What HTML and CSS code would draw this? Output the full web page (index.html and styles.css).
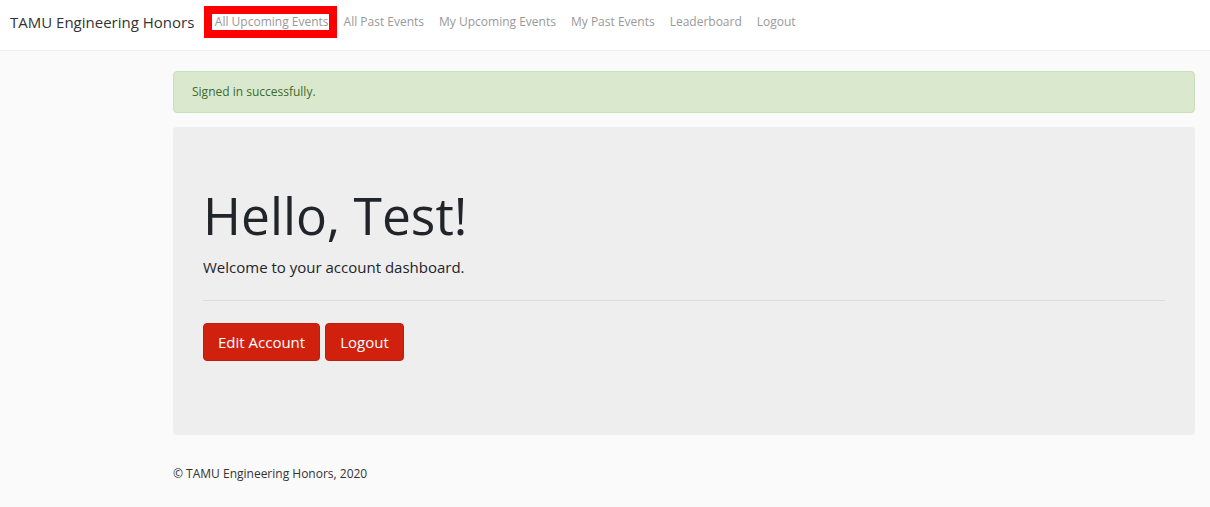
FILE: index.html
```html
<!DOCTYPE html>
<html lang="en">
<head>
<meta charset="utf-8">
<title>TAMU Engineering Honors</title>
<link rel="stylesheet" href="styles.css">
</head>
<body>
<nav class="navbar">
  <a class="brand" href="#">TAMU Engineering Honors</a>
  <ul class="nav">
    <li><a class="nav-link highlighted" href="#"><span class="mark">All Upcoming Events</span></a></li>
    <li><a class="nav-link" href="#">All Past Events</a></li>
    <li><a class="nav-link" href="#">My Upcoming Events</a></li>
    <li><a class="nav-link" href="#">My Past Events</a></li>
    <li><a class="nav-link" href="#">Leaderboard</a></li>
    <li><a class="nav-link" href="#">Logout</a></li>
  </ul>
</nav>
<main class="main">
  <div class="alert">Signed in successfully.</div>
  <section class="jumbotron">
    <h1 class="title">Hello, Test!</h1>
    <p class="lead">Welcome to your account dashboard.</p>
    <hr class="rule">
    <div class="actions">
      <a class="btn" href="#">Edit Account</a>
      <a class="btn" href="#">Logout</a>
    </div>
  </section>
  <footer class="footer">© TAMU Engineering Honors, 2020</footer>
</main>
</body>
</html>
```
FILE: styles.css
```css
* { box-sizing: border-box; }
html, body { margin: 0; padding: 0; }
body {
  font-family: "Open Sans", "Liberation Sans", sans-serif;
  background: #fafafa;
  color: #212529;
  width: 1210px;
  height: 507px;
  overflow: hidden;
}
a { text-decoration: none; }

.navbar {
  display: flex;
  align-items: center;
  height: 51px;
  background: #fff;
  border-bottom: 1px solid #eeeeee;
  padding: 0 10px;
}
.brand {
  font-size: 15px;
  color: #333;
  margin-right: 13px;
  line-height: 1;
  padding-bottom: 6px;
}
.nav {
  display: flex;
  list-style: none;
  margin: 0;
  padding: 0 0 7px 0;
}
.nav-link {
  display: block;
  font-size: 12px;
  color: #999;
  padding: 0 7.5px;
  line-height: 16px;
}
.mark {
  display: inline-block;
  background: #fff;
  outline: 8px solid #ff0000;
  padding: 0 0 0 3px;
  margin-left: -3px;
}

.main {
  padding: 20px 15px 0 173px;
}
.alert {
  background: #dae8cd;
  border: 1px solid #c9dfb8;
  border-radius: 4px;
  color: #3d6b2e;
  font-size: 12px;
  height: 42px;
  line-height: 40px;
  padding: 0 18px;
  margin-bottom: 14px;
}
.jumbotron {
  background: #eeeeee;
  border-radius: 4px;
  height: 308px;
  padding: 58px 30px 0 30px;
}
.title {
  font-size: 51.5px;
  font-weight: 400;
  line-height: 1.2;
  margin: 0;
  color: #212529;
}
.lead {
  font-size: 15px;
  line-height: 1.5;
  margin: 9px 0 0 0;
  color: #212529;
}
.rule {
  border: 0;
  border-top: 1px solid #dddddd;
  margin: 22px 0 22px 0;
}
.actions {
  display: flex;
  gap: 5px;
}
.btn {
  display: inline-block;
  background: #d0210f;
  border: 1px solid #c01e0d;
  color: #fff;
  font-size: 15px;
  line-height: 24px;
  padding: 6px 14px;
  border-radius: 4px;
  height: 38px;
}
.footer {
  font-size: 12px;
  color: #333;
  margin-top: 30px;
}
```
